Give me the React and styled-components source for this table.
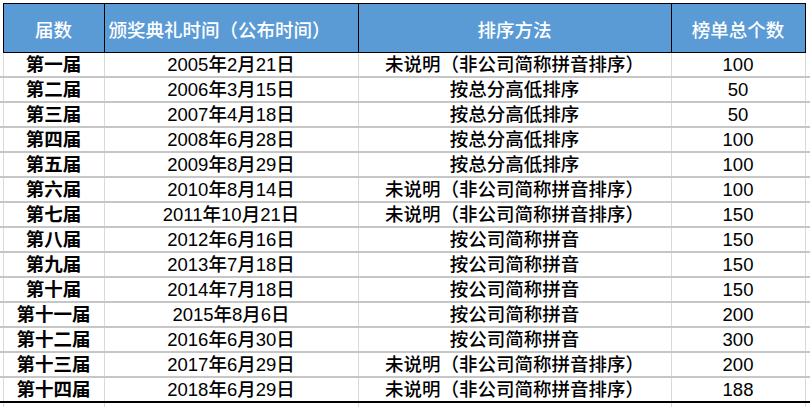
import React from "react";
import styled, { createGlobalStyle } from "styled-components";

const Global = createGlobalStyle`
  html, body { margin: 0; padding: 0; background: #ffffff; overflow: hidden; }
  body { width: 810px; height: 407px; }
`;

const Page = styled.div`
  padding-top: 3px;
  width: 810px;
  height: 404px;
  overflow: hidden;
`;

const Sheet = styled.table`
  border-collapse: collapse;
  table-layout: fixed;
  width: 810px;
  font-family: "Liberation Sans", "Noto Sans CJK SC", sans-serif;
  font-size: 18.5px;
  color: #000;
`;

const HeadRow = styled.tr`
  height: 49px;
`;

const Row = styled.tr`
  height: 24.86px;
`;

const Head = styled.th`
  background: #5b9bd5;
  color: #ffffff;
  font-weight: 500;
  border: 1px solid #000;
  padding: 6px 0 0 ${(p) => (p.$left ? "4px" : "0")};
  text-align: ${(p) => (p.$left ? "left" : "center")};
  line-height: 24px;
  vertical-align: middle;
  white-space: nowrap;
  overflow: hidden;
`;

const Stub = styled.td`
  padding: 0;
  border-bottom: ${(p) => (p.$plain ? "none" : p.$last ? "2px solid #000" : "2px solid #c6c6c6")};
  border-left: ${(p) => (p.$edge ? "1px solid #d9d9d9" : "none")};
`;

const Cell = styled.td`
  padding: 1px 0 0;
  text-align: center;
  vertical-align: middle;
  line-height: 22px;
  white-space: nowrap;
  overflow: visible;
  font-weight: ${(p) => (p.$bold ? 700 : 500)};
  border-left: 1px solid #d9d9d9;
  border-right: 1px solid #d9d9d9;
  border-bottom: ${(p) => (p.$last ? "2px solid #000" : "2px solid #c6c6c6")};
`;

const Tail = styled.td`
  padding: 0;
  height: 5px;
  border-left: ${(p) => (p.$first ? "none" : "1px solid #d9d9d9")};
  border-right: ${(p) => (p.$end ? "none" : "1px solid #d9d9d9")};
`;

const rows = [
  ["第一届", "2005年2月21日", "未说明（非公司简称拼音排序）", "100"],
  ["第二届", "2006年3月15日", "按总分高低排序", "50"],
  ["第三届", "2007年4月18日", "按总分高低排序", "50"],
  ["第四届", "2008年6月28日", "按总分高低排序", "100"],
  ["第五届", "2009年8月29日", "按总分高低排序", "100"],
  ["第六届", "2010年8月14日", "未说明（非公司简称拼音排序）", "100"],
  ["第七届", "2011年10月21日", "未说明（非公司简称拼音排序）", "150"],
  ["第八届", "2012年6月16日", "按公司简称拼音", "150"],
  ["第九届", "2013年7月18日", "按公司简称拼音", "150"],
  ["第十届", "2014年7月18日", "按公司简称拼音", "150"],
  ["第十一届", "2015年8月6日", "按公司简称拼音", "200"],
  ["第十二届", "2016年6月30日", "按公司简称拼音", "300"],
  ["第十三届", "2017年6月29日", "未说明（非公司简称拼音排序）", "200"],
  ["第十四届", "2018年6月29日", "未说明（非公司简称拼音排序）", "188"],
];

export default function App() {
  return (
    <Page>
      <Global />
      <Sheet>
        <colgroup>
          <col style={{ width: 3 }} />
          <col style={{ width: 101 }} />
          <col style={{ width: 254 }} />
          <col style={{ width: 313 }} />
          <col style={{ width: 134 }} />
          <col style={{ width: 5 }} />
        </colgroup>
        <tbody>
          <HeadRow>
            <Stub $plain />
            <Head>届数</Head>
            <Head $left>颁奖典礼时间（公布时间）</Head>
            <Head>排序方法</Head>
            <Head>榜单总个数</Head>
            <Stub $plain />
          </HeadRow>
          {rows.map((r, i) => {
            const last = i === rows.length - 1;
            return (
              <Row key={r[0]}>
                <Stub $last={last} />
                <Cell $bold $last={last}>{r[0]}</Cell>
                <Cell $last={last}>{r[1]}</Cell>
                <Cell $last={last}>{r[2]}</Cell>
                <Cell $last={last}>{r[3]}</Cell>
                <Stub $last={last} $edge />
              </Row>
            );
          })}
          <tr>
            <Tail $first />
            <Tail />
            <Tail />
            <Tail />
            <Tail />
            <Tail $end />
          </tr>
        </tbody>
      </Sheet>
    </Page>
  );
}
